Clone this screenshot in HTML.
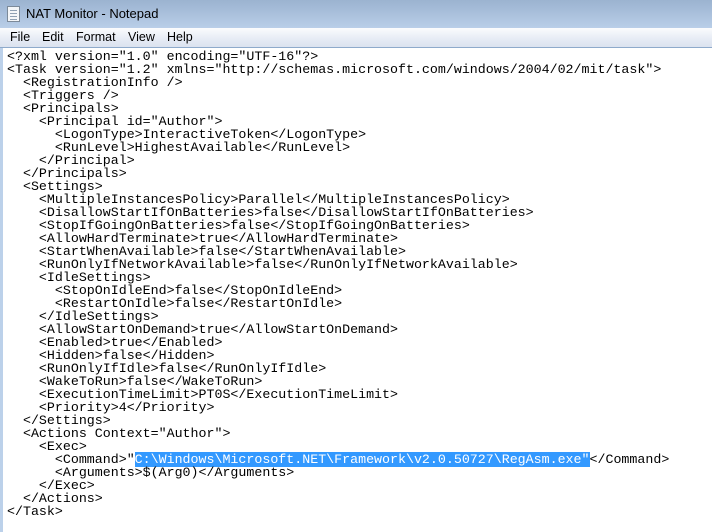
<!DOCTYPE html>
<html><head><style>
*{margin:0;padding:0;box-sizing:border-box}
body{width:712px;height:532px;overflow:hidden;background:#fff;font-family:"Liberation Sans",sans-serif;position:relative}
.title{position:absolute;left:0;top:0;width:712px;height:28px;background:linear-gradient(#9bb3d0,#b9cee8);}
.title span{position:absolute;left:26px;top:6px;font-size:13px;color:#000}
.icon{position:absolute;left:7px;top:6px;width:13px;height:16px;background:#f4f6f8;border:1px solid #7c8a99}
.icon i{position:absolute;left:2px;right:2px;height:1px;background:#8fa0b3}
.menu{position:absolute;left:0;top:28px;width:712px;height:20px;background:linear-gradient(#fbfcfd,#e7ecf5 55%,#dbe2ef);border-bottom:1px solid #8eaacb;font-size:12.5px}
.menu span{position:absolute;top:2px}
.left{position:absolute;left:0;top:48px;width:3px;height:484px;background:#bcd1ea}
pre{position:absolute;left:7px;top:50px;font-family:"Liberation Mono",monospace;font-size:13.3px;line-height:13px;color:#000;letter-spacing:0}
.sel{background:#3399ff;color:#fff}
</style></head><body>
<div class="title"><div class="icon"><i style="top:3px"></i><i style="top:6px"></i><i style="top:9px"></i><i style="top:12px"></i></div><span>NAT Monitor - Notepad</span></div>
<div class="menu"><span style="left:10px">File</span><span style="left:42px">Edit</span><span style="left:76px">Format</span><span style="left:128px">View</span><span style="left:167px">Help</span></div>
<div class="left"></div>
<pre>&lt;?xml version="1.0" encoding="UTF-16"?&gt;
&lt;Task version="1.2" xmlns="http://schemas.microsoft.com/windows/2004/02/mit/task"&gt;
  &lt;RegistrationInfo /&gt;
  &lt;Triggers /&gt;
  &lt;Principals&gt;
    &lt;Principal id="Author"&gt;
      &lt;LogonType&gt;InteractiveToken&lt;/LogonType&gt;
      &lt;RunLevel&gt;HighestAvailable&lt;/RunLevel&gt;
    &lt;/Principal&gt;
  &lt;/Principals&gt;
  &lt;Settings&gt;
    &lt;MultipleInstancesPolicy&gt;Parallel&lt;/MultipleInstancesPolicy&gt;
    &lt;DisallowStartIfOnBatteries&gt;false&lt;/DisallowStartIfOnBatteries&gt;
    &lt;StopIfGoingOnBatteries&gt;false&lt;/StopIfGoingOnBatteries&gt;
    &lt;AllowHardTerminate&gt;true&lt;/AllowHardTerminate&gt;
    &lt;StartWhenAvailable&gt;false&lt;/StartWhenAvailable&gt;
    &lt;RunOnlyIfNetworkAvailable&gt;false&lt;/RunOnlyIfNetworkAvailable&gt;
    &lt;IdleSettings&gt;
      &lt;StopOnIdleEnd&gt;false&lt;/StopOnIdleEnd&gt;
      &lt;RestartOnIdle&gt;false&lt;/RestartOnIdle&gt;
    &lt;/IdleSettings&gt;
    &lt;AllowStartOnDemand&gt;true&lt;/AllowStartOnDemand&gt;
    &lt;Enabled&gt;true&lt;/Enabled&gt;
    &lt;Hidden&gt;false&lt;/Hidden&gt;
    &lt;RunOnlyIfIdle&gt;false&lt;/RunOnlyIfIdle&gt;
    &lt;WakeToRun&gt;false&lt;/WakeToRun&gt;
    &lt;ExecutionTimeLimit&gt;PT0S&lt;/ExecutionTimeLimit&gt;
    &lt;Priority&gt;4&lt;/Priority&gt;
  &lt;/Settings&gt;
  &lt;Actions Context="Author"&gt;
    &lt;Exec&gt;
      &lt;Command&gt;"<span class="sel">C:\Windows\Microsoft.NET\Framework\v2.0.50727\RegAsm.exe"</span>&lt;/Command&gt;
      &lt;Arguments&gt;$(Arg0)&lt;/Arguments&gt;
    &lt;/Exec&gt;
  &lt;/Actions&gt;
&lt;/Task&gt;</pre>
</body></html>
